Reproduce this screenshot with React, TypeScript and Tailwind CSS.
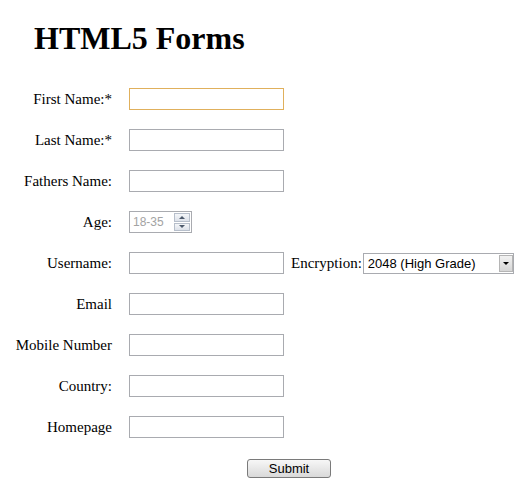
import { useState } from "react";

const serif = "font-['Liberation_Serif','Times_New_Roman',serif]";
const sans = "font-['Liberation_Sans',Arial,sans-serif]";
const inputCls = `block h-[22px] w-[155px] border border-[#a9abb0] bg-white px-[3px] text-[13px] text-black outline-none ${sans}`;

function Label({ children }: { children: React.ReactNode }) {
  return <label className={`text-right text-[15px] leading-[17px] text-black ${serif}`}>{children}</label>;
}

function Spinner() {
  return (
    <div className="flex h-[18px] w-[16px] flex-col gap-px">
      <div className="flex flex-1 items-center justify-center border border-[#b7bfcb] bg-gradient-to-b from-[#f4f6f9] to-[#dde2ea]">
        <div className="h-0 w-0 border-x-[3px] border-b-[3px] border-x-transparent border-b-[#4d5a6c]" />
      </div>
      <div className="flex flex-1 items-center justify-center border border-[#b7bfcb] bg-gradient-to-b from-[#f4f6f9] to-[#dde2ea]">
        <div className="h-0 w-0 border-x-[3px] border-t-[3px] border-x-transparent border-t-[#4d5a6c]" />
      </div>
    </div>
  );
}

export default function App() {
  const [encryption, setEncryption] = useState("2048");

  return (
    <div className={`min-h-[503px] bg-white pt-[20px] ${serif}`}>
      <h1 className="pl-[34px] text-[32px] font-bold leading-[normal] text-black">HTML5 Forms</h1>

      <form className="mt-[31px]" onSubmit={(e) => e.preventDefault()}>
        <div className="grid grid-cols-[112px_auto] items-center gap-x-[17px] gap-y-[19px]">
          <Label>First Name:*</Label>
          <div className="flex">
            <input className={`${inputCls} border-[#e0b05c]`} />
          </div>

          <Label>Last Name:*</Label>
          <div className="flex">
            <input className={inputCls} />
          </div>

          <Label>Fathers Name:</Label>
          <div className="flex">
            <input className={inputCls} />
          </div>

          <Label>Age:</Label>
          <div className="flex h-[22px] w-[63px] items-center border border-[#a9abb0] bg-white pr-px">
            <input
              placeholder="18-35"
              className={`w-0 flex-1 px-[3px] text-[12px] text-black outline-none placeholder:text-[#a3a3a3] ${sans}`}
            />
            <Spinner />
          </div>

          <Label>Username:</Label>
          <div className="flex h-[22px] items-center">
            <input className={inputCls} />
            <span className="ml-[7px] text-[15px] leading-[17px] text-black">Encryption:</span>
            <div className="relative ml-px h-[21px] w-[151px]">
              <select
                value={encryption}
                onChange={(e) => setEncryption(e.target.value)}
                className={`block h-full w-full appearance-none border border-[#a9abb0] bg-white pl-[4px] text-[13px] text-black outline-none ${sans}`}
              >
                <option value="2048">2048 (High Grade)</option>
                <option value="1024">1024 (Medium Grade)</option>
              </select>
              <div className="pointer-events-none absolute right-[1px] top-[2px] flex h-[17px] w-[14px] items-center justify-center border border-[#b5b5b5] bg-gradient-to-b from-[#f2f2f2] to-[#d6d6d6]">
                <div className="h-0 w-0 border-x-[3px] border-t-[3px] border-x-transparent border-t-black" />
              </div>
            </div>
          </div>

          <Label>Email</Label>
          <div className="flex">
            <input type="email" className={inputCls} />
          </div>

          <Label>Mobile Number</Label>
          <div className="flex">
            <input className={inputCls} />
          </div>

          <Label>Country:</Label>
          <div className="flex">
            <input className={inputCls} />
          </div>

          <Label>Homepage</Label>
          <div className="flex">
            <input className={inputCls} />
          </div>
        </div>

        <div className="mt-[21px] flex pl-[247px]">
          <button
            type="submit"
            className={`h-[19px] w-[84px] rounded-[3px] border border-[#7a7a7a] bg-gradient-to-b from-[#f7f7f7] to-[#d9d9d9] text-[13px] leading-none text-black ${sans}`}
          >
            Submit
          </button>
        </div>
      </form>
    </div>
  );
}
